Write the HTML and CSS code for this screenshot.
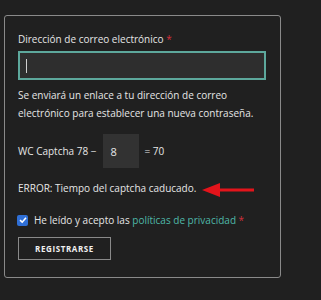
FILE: index.html
```html
<!DOCTYPE html>
<html lang="es">
<head>
  <meta charset="UTF-8">
  <meta name="viewport" content="width=device-width, initial-scale=1.0">
  <title>Registro</title>
  <link rel="stylesheet" href="styles.css">
</head>
<body>
  <form class="box">
    <label class="label" for="email">Dirección de correo electrónico <span class="req">*</span></label>
    <div class="input"><span class="caret"></span></div>
    <p class="note">Se enviará un enlace a tu dirección de correo electrónico para establecer una nueva contraseña.</p>
    <div class="captcha">
      <span>WC Captcha 78 −</span>
      <span class="cbox">8</span>
      <span>= 70</span>
    </div>
    <div class="error">
      <span>ERROR: Tiempo del captcha caducado.</span>
      <svg class="arrow" width="56" height="16" viewBox="0 0 56 16">
        <path d="M18 6.5 H54 V9.5 H18 Z" fill="#e3141b"/>
        <path d="M2 8 L20 1 L20 15 Z" fill="#e3141b"/>
      </svg>
    </div>
    <div class="terms">
      <span class="check">
        <svg width="10" height="10" viewBox="0 0 10 10"><path d="M2 5.2 L4.2 7.2 L8 2.8" fill="none" stroke="#fff" stroke-width="1.6"/></svg>
      </span>
      <span>He leído y acepto las <a class="link">políticas de privacidad</a> <span class="req">*</span></span>
    </div>
    <button type="button" class="btn">REGISTRARSE</button>
  </form>
</body>
</html>
```

FILE: styles.css
```css
body {
  margin: 0;
  background: #202020;
  font-family: "Open Sans", "Noto Sans", sans-serif;
  color: #e6e6e6;
  font-size: 10px;
}
.box {
  margin: 15px 0 0 4px;
  width: 262px;
  height: 246px;
  border: 1px solid #8a8a8a;
  border-radius: 3px;
  padding: 15px 0 0 13px;
  box-sizing: content-box;
}
.label { display: block; line-height: 16px; }
.req { color: #d3303c; }
.input {
  margin-top: 4px;
  width: 248px;
  height: 29px;
  border: 2px solid #5da89c;
  background: #2e2e2e;
  display: flex;
  align-items: center;
  padding-left: 6px;
  box-sizing: border-box;
}
.caret { width: 1px; height: 14px; background: #cfcfcf; }
.note { margin: 6px 0 0; line-height: 18px; width: 240px; }
.captcha {
  margin-top: 12px;
  display: flex;
  align-items: center;
  gap: 6px;
}
.cbox {
  width: 36px;
  height: 34px;
  background: #323232;
  display: flex;
  align-items: center;
  padding-left: 8px;
  box-sizing: border-box;
  font-size: 11px;
}
.error {
  margin-top: 12px;
  display: flex;
  align-items: center;
  gap: 4px;
  height: 16px;
}
.arrow { margin-top: 4px; }
.terms {
  margin-top: 16px;
  display: flex;
  align-items: center;
  gap: 6px;
  height: 16px;
  margin-left: -1px;
}
.check {
  width: 11px;
  height: 11px;
  background: #2f6fd6;
  border-radius: 2px;
  display: flex;
  align-items: center;
  justify-content: center;
}
.link { color: #4fb8a8; }
.btn {
  display: block;
  margin-top: 9px;
  width: 93px;
  height: 23px;
  background: transparent;
  border: 1px solid #8a8a8a;
  color: #f0f0f0;
  font-family: inherit;
  font-size: 8px;
  font-weight: 700;
  letter-spacing: 0.6px;
  padding: 0;
}
```
